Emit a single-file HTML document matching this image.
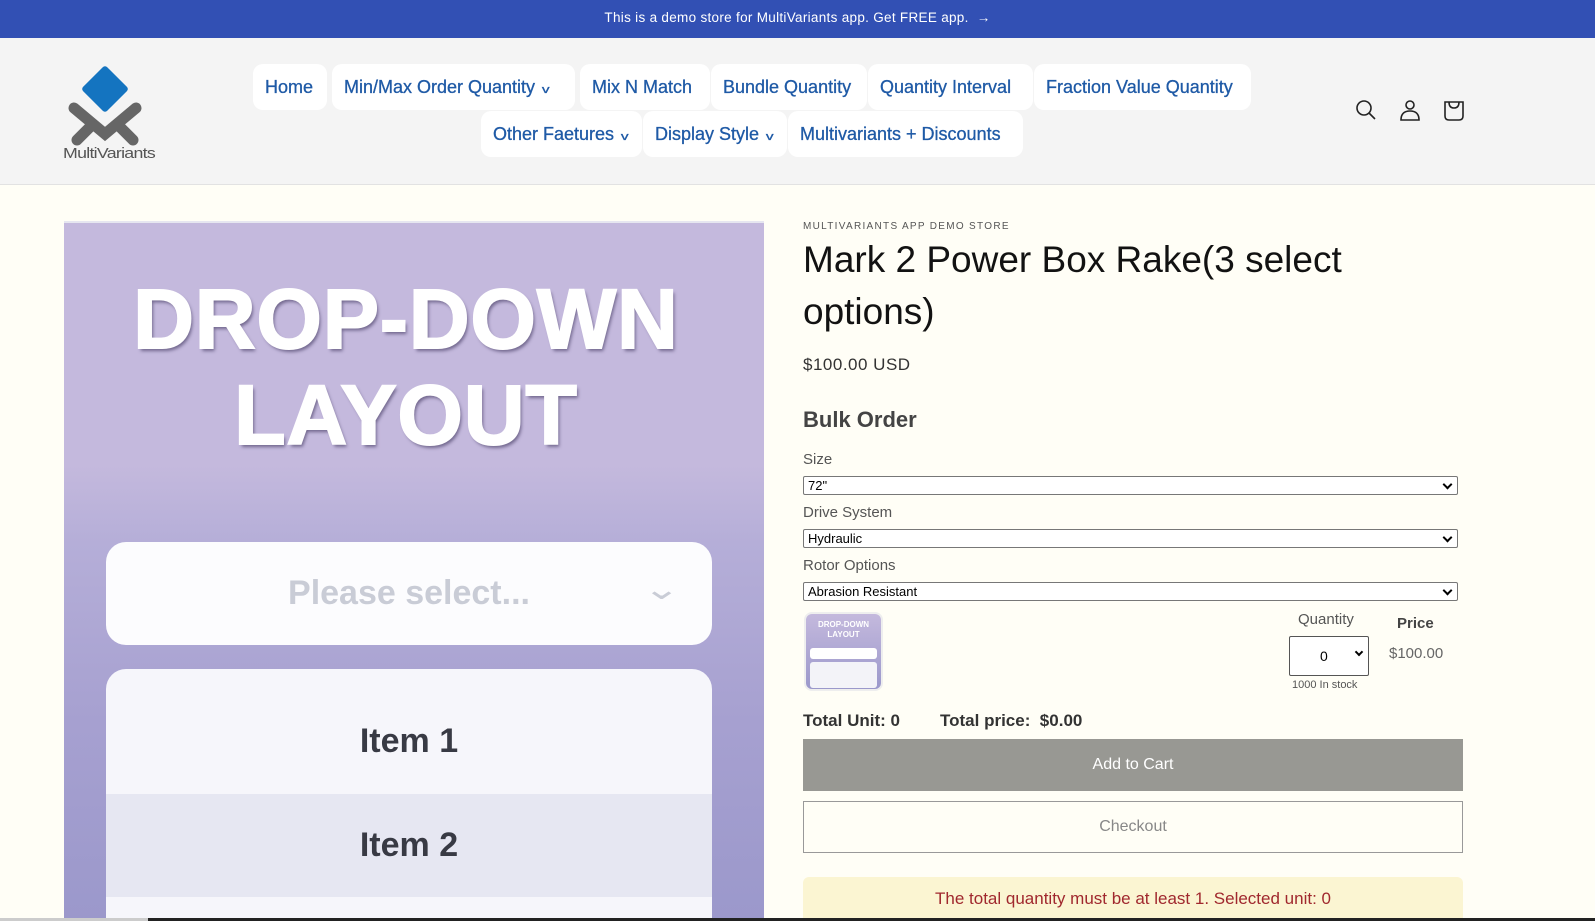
<!DOCTYPE html>
<html><head><meta charset="utf-8"><style>
*{margin:0;padding:0;box-sizing:border-box}
html,body{width:1595px;height:921px;overflow:hidden}
body{background:#fffef6;font-family:"Liberation Sans",sans-serif;position:relative}
.abs{position:absolute}
.top{left:0;top:0;width:1595px;height:38px;background:#3250b4;color:#fff;font-size:13.5px;text-align:center;line-height:36px;letter-spacing:.3px}
.hdr{left:0;top:38px;width:1595px;height:147px;background:#f4f4f4;border-bottom:1px solid #e2e2e2}
.pill{position:absolute;height:46px;background:#fff;border-radius:10px;color:#1f5aa6;font-size:18px;line-height:46px;padding:0 12px;white-space:nowrap;-webkit-text-stroke:.3px #1f5aa6}
.pill .c{font-size:11px;margin-left:8px;display:inline-block;transform:scaleX(1.4)}
.lbl{position:absolute;left:803px;font-size:15px;color:#555}
.sel{position:absolute;left:803px;width:655px;height:19px;border:1px solid #777;border-radius:2px;background:#fff;font-size:13px;line-height:17px;padding-left:4px;color:#000}
.sel:after{content:"";position:absolute;right:6px;top:4px;width:5px;height:5px;border-right:2px solid #000;border-bottom:2px solid #000;transform:rotate(45deg)}
</style></head><body>
<div class="abs top">This is a demo store for MultiVariants app. Get FREE app. &nbsp;→</div>
<div class="abs hdr"></div>
<svg class="abs" style="left:60px;top:62px" width="100" height="100" viewBox="0 0 100 100">
<rect x="28" y="10" width="34" height="34" rx="3" fill="#1474c0" transform="rotate(45 45 27)"/>
<path d="M14 46 L45 72 L76 46" stroke="#666" stroke-width="11" fill="none" stroke-linecap="round"/>
<path d="M17 78 L31 64 M73 78 L59 64" stroke="#666" stroke-width="11" stroke-linecap="round"/>
<text x="49" y="96" font-size="15" fill="#555" text-anchor="middle" font-family="Liberation Sans" letter-spacing="-0.6" textLength="92" lengthAdjust="spacingAndGlyphs">MultiVariants</text>
</svg>
<div class="pill" style="left:253px;top:64px;width:74px">Home</div>
<div class="pill" style="left:332px;top:64px;width:243px">Min/Max Order Quantity<span class="c">v</span></div>
<div class="pill" style="left:580px;top:64px;width:130px">Mix N Match</div>
<div class="pill" style="left:711px;top:64px;width:156px">Bundle Quantity</div>
<div class="pill" style="left:868px;top:64px;width:165px">Quantity Interval</div>
<div class="pill" style="left:1034px;top:64px;width:217px">Fraction Value Quantity</div>
<div class="pill" style="left:481px;top:111px;width:161px">Other Faetures<span class="c">v</span></div>
<div class="pill" style="left:643px;top:111px;width:144px">Display Style<span class="c">v</span></div>
<div class="pill" style="left:788px;top:111px;width:235px">Multivariants + Discounts</div>
<svg class="abs" style="left:1355px;top:99px" width="110" height="24" viewBox="0 0 110 24" fill="none" stroke="#222" stroke-width="1.6">
<circle cx="9" cy="9" r="7"/><path d="M14 14 L20 20"/>
<circle cx="55" cy="6" r="4"/><path d="M46 21 Q46 12 55 12 Q64 12 64 21 Z"/>
<path d="M90 3 H108 V17 Q108 21 104 21 H94 Q90 21 90 17 Z M94 3 Q94 9 99 9 Q104 9 104 3"/>
</svg>
<div class="abs" style="left:64px;top:221px;width:700px;height:700px;background:linear-gradient(180deg,#c4b9dd 0,#c4b9dd 242px,#b5aed8 320px,#a6a0d0 500px,#9b98cb 700px);border-top:2px solid #e6e6f0;overflow:hidden">
<div style="position:absolute;left:-8px;top:48px;width:100%;text-align:center;color:#fff;font:900 84px/96px 'Liberation Sans',sans-serif;-webkit-text-stroke:2px #fff;text-shadow:2px 3px 3px rgba(60,50,90,.6);letter-spacing:1px">DROP-DOWN<br>LAYOUT</div>
<div style="position:absolute;left:42px;top:319px;width:606px;height:103px;background:#fcfcfe;border-radius:20px;color:#c9ccd6;font:bold 34px/103px 'Liberation Sans';text-align:center">Please select...<span style="position:absolute;right:38px;top:-4px;font-weight:normal;font-size:30px;transform:scaleX(1.5)">⌄</span></div>
<div style="position:absolute;left:42px;top:446px;width:606px;height:300px;background:#f6f6fb;border-radius:20px;overflow:hidden">
<div style="height:125px;font:bold 34px/145px 'Liberation Sans';color:#383a44;text-align:center">Item 1</div>
<div style="height:103px;background:#e6e7f2;font:bold 34px/103px 'Liberation Sans';color:#383a44;text-align:center">Item 2</div>
</div>
</div>
<div class="abs" style="left:803px;top:221px;font-size:10px;letter-spacing:1.3px;color:#555">MULTIVARIANTS APP DEMO STORE</div>
<div class="abs" style="left:803px;top:234px;font-size:37px;line-height:52px;color:#121212;width:640px">Mark 2 Power Box Rake(3 select options)</div>
<div class="abs" style="left:803px;top:355px;font-size:17px;color:#333;letter-spacing:.5px">$100.00 USD</div>
<div class="abs" style="left:803px;top:407px;font-size:22px;font-weight:bold;color:#444">Bulk Order</div>
<div class="lbl" style="top:451px">Size</div><div class="sel" style="top:476px">72"</div>
<div class="lbl" style="top:504px">Drive System</div><div class="sel" style="top:529px">Hydraulic</div>
<div class="lbl" style="top:557px">Rotor Options</div><div class="sel" style="top:582px">Abrasion Resistant</div>
<div class="abs" style="left:804px;top:612px;width:79px;height:79px;border-radius:8px;background:linear-gradient(180deg,#c4b9dd,#9b98cb);border:2px solid #eee;color:#fff;font:bold 8px/10px 'Liberation Sans';text-align:center;padding-top:6px">DROP-DOWN<br>LAYOUT
<div style="margin:8px 4px 0;height:11px;background:#fff;border-radius:3px"></div>
<div style="margin:3px 4px 0;height:26px;background:#f3f3f8;border-radius:3px"></div></div>
<div class="abs" style="left:1298px;top:611px;font-size:15px;color:#555">Quantity</div>
<div class="abs" style="left:1289px;top:636px;width:80px;height:40px;border:1px solid #555;border-radius:2px;background:#fff;font-size:14px;line-height:38px;padding-left:30px">0<span style="position:absolute;right:6px;top:12px;width:6px;height:6px;border-right:2px solid #000;border-bottom:2px solid #000;transform:rotate(45deg)"></span></div>
<div class="abs" style="left:1397px;top:615px;font-size:15px;font-weight:bold;color:#444">Price</div>
<div class="abs" style="left:1389px;top:645px;font-size:15px;color:#666">$100.00</div>
<div class="abs" style="left:1292px;top:679px;font-size:11px;color:#555">1000 In stock</div>
<div class="abs" style="left:803px;top:711px;font-size:17px;font-weight:bold;color:#333">Total Unit: 0</div>
<div class="abs" style="left:940px;top:711px;font-size:17px;font-weight:bold;color:#333">Total price:&nbsp; $0.00</div>
<div class="abs" style="left:803px;top:739px;width:660px;height:52px;background:#989893;color:#fff;font-size:16px;line-height:52px;text-align:center">Add to Cart</div>
<div class="abs" style="left:803px;top:801px;width:660px;height:52px;border:1px solid #999;color:#888;font-size:16px;line-height:50px;text-align:center">Checkout</div>
<div class="abs" style="left:803px;top:877px;width:660px;height:44px;background:#fbf5d2;border-radius:6px 6px 0 0;color:#a0282e;font-size:17px;line-height:44px;text-align:center">The total quantity must be at least 1. Selected unit: 0</div>
<div class="abs" style="left:0;top:918px;width:148px;height:3px;background:#ccc"></div>
<div class="abs" style="left:148px;top:918px;width:1447px;height:3px;background:#222"></div>
</body></html>
